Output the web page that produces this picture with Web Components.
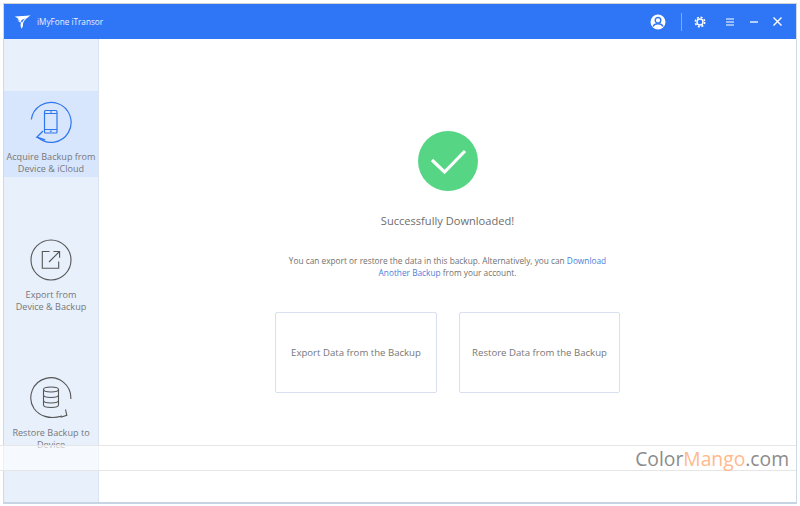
<!DOCTYPE html>
<html>
<head>
<meta charset="utf-8">
<title>iMyFone iTransor</title>
<style>
  html, body { margin: 0; height: 100%; background: #fff; }
  body { font-family: "Open Sans", "Noto Sans", sans-serif; color: #666; }
</style>
</head>
<body>
<app-window>
  <title-bar slot="top" name="iMyFone iTransor"></title-bar>
  <side-nav slot="side">
    <nav-item active>
      <svg slot="icon" viewBox="0 0 44 44" width="44" height="44" fill="none" stroke="#2f76f0" stroke-width="1.2">
        <path d="M2.300 19.500A20 20 0 1 1 9 37.500"/>
        <path d="M14 31 7.800 37.200l8.400 2.600" stroke-width="1.300"/>
        <rect x="15.500" y="10.500" width="12.500" height="22.500" rx="1"/>
        <path d="M15.500 13.500h12.500M15.500 29.500h12.500M21 12h2"/>
        <path d="M20.800 31.200h2"/>
      </svg>
      Acquire Backup from<br>Device &amp; iCloud
    </nav-item>
    <nav-item>
      <svg slot="icon" viewBox="0 0 44 44" width="44" height="44" fill="none" stroke="#555" stroke-width="1.1">
        <circle cx="22" cy="22" r="20"/>
        <path d="M20.500 13.500h-7.200v16.700h16.400v-6.700"/>
        <path d="M20 24 30.500 13.500M24.400 13.500h6.200v6.300"/>
      </svg>
      Export from<br>Device &amp; Backup
    </nav-item>
    <nav-item>
      <svg slot="icon" viewBox="0 0 44 44" width="44" height="44" fill="none" stroke="#555" stroke-width="1.1">
        <path d="M41.800 23A20 20 0 1 0 5 32.500C10 39.500 20 44 33 40"/>
        <path d="M36.500 33.500l1.300 5.800-6.200 2"/>
        <ellipse cx="22" cy="13.500" rx="7.500" ry="2.500"/>
        <path d="M14.500 13.500v15.500c0 1.500 3.500 2.500 7.500 2.500s7.500-1 7.500-2.500V13.500M14.500 19c0 1.500 3.500 2.500 7.500 2.500s7.500-1 7.500-2.500M14.500 24.500c0 1.500 3.500 2.500 7.500 2.500s7.500-1 7.500-2.500"/>
      </svg>
      Restore Backup to<br>Device
    </nav-item>
  </side-nav>
  <success-panel>
    You can export or restore the data in this backup. Alternatively, you can <a href="#" style="color:#4a80dc;text-decoration:none">Download<br>Another Backup</a> from your account.
    <action-card slot="actions">Export Data from the Backup</action-card>
    <action-card slot="actions">Restore Data from the Backup</action-card>
  </success-panel>
  <watermark-strip slot="overlay"></watermark-strip>
</app-window>
<script>
class AppWindow extends HTMLElement {
  constructor() {
    super()
    this.attachShadow({mode: 'open'})
    this.shadowRoot.innerHTML = `<style>
      :host { display: block; height: 506px; box-sizing: border-box; padding: 3px 3px 2px 3px; position: relative; }
      .frame {
        height: 100%;
        box-sizing: border-box;
        border: 1px solid #ccd9e8;
        border-top-color: #d4d4d4;
        border-bottom: 2px solid #c6d4e4;
        display: flex;
        flex-direction: column;
      }
      .body { flex: 1; display: flex; min-height: 0; }
    </style>
    <div class="frame">
      <slot name="top"></slot>
      <div class="body"><slot name="side"></slot><slot></slot></div>
    </div>
    <slot name="overlay"></slot>`
  }
}

class TitleBar extends HTMLElement {
  constructor() {
    super()
    this.attachShadow({mode: 'open'})
    this.shadowRoot.innerHTML = `<style>
      :host { display: flex; align-items: center; height: 35px; background: #2f76f6; color: #fff; font-size: 8.200px; }
      .logo { margin-left: 10px; width: 17px; height: 16px; }
      .name { margin-left: 6px; flex: 1; color: #e8f0ff; }
      .tools { display: flex; align-items: center; }
      svg { display: block; }
      .sep { width: 1px; height: 18px; background: #7fa9f5; margin: 0 12px 0 15px; }
    </style>
    <svg class="logo" viewBox="0 0 20 18">
      <path fill="#fff" d="M1 2.500 15 1.500 19.500 1 15 4.500c-3 2-5 5.500-4.500 9.500L9 17c-1.500-2.500-1.500-5-.8-7.500L5 8.500 7 7.200 4 6.800 5.500 5.500 1 2.500Z"/>
      <path fill="#2f76f6" d="M9.500 10c.5-2 2-4 4-5.500-2.500 1-4.500 2-5.500 3.500Z"/>
    </svg>
    <span class="name"></span>
    <div class="tools">
      <svg width="16" height="16" viewBox="0 0 16 16">
        <circle cx="8" cy="8" r="7.500" fill="#fff"/>
        <circle cx="8" cy="6.300" r="2.800" fill="none" stroke="#2f76f6" stroke-width="1.400"/>
        <path d="M3 12.500c1-2.200 3-2.800 5-2.800s4 .6 5 2.800" fill="none" stroke="#2f76f6" stroke-width="1.400"/>
      </svg>
      <div class="sep"></div>
      <svg width="12" height="12" viewBox="0 0 12 12" fill="none" stroke="#fff" style="margin-right:19px">
        <circle cx="6" cy="6" r="3" stroke-width="1.400"/>
        <circle cx="6" cy="6" r="4.700" stroke-width="1.500" stroke-dasharray="2 1.690"/>
      </svg>
      <svg width="10" height="10" viewBox="0 0 10 10" fill="none" stroke="#fff" stroke-width="1.100" style="margin-right:14px">
        <path d="M1 2h8M1 5h8M1 8h8"/>
      </svg>
      <svg width="10" height="10" viewBox="0 0 10 10" fill="none" stroke="#fff" stroke-width="1.300" style="margin-right:13px">
        <path d="M1 5h8"/>
      </svg>
      <svg width="11" height="11" viewBox="0 0 11 11" fill="none" stroke="#fff" stroke-width="1.400" style="margin-right:13px">
        <path d="M1.500 1.500l8 8M9.500 1.500l-8 8"/>
      </svg>
    </div>`
    this.shadowRoot.querySelector('.name').textContent = this.getAttribute('name')
  }
}

class SideNav extends HTMLElement {
  constructor() {
    super()
    this.attachShadow({mode: 'open'})
    this.shadowRoot.innerHTML = `<style>
      :host {
        display: flex;
        flex-direction: column;
        gap: 52px;
        box-sizing: border-box;
        width: 95px;
        padding-top: 52px;
        background: #e8f0fc;
        border-right: 1px solid #dbe3ee;
      }
    </style>
    <slot></slot>`
  }
}

class NavItem extends HTMLElement {
  constructor() {
    super()
    this.attachShadow({mode: 'open'})
    this.shadowRoot.innerHTML = `<style>
      :host {
        display: flex;
        flex-direction: column;
        align-items: center;
        height: 86px;
        box-sizing: border-box;
        padding-top: 9px;
        font-size: 9.100px;
        line-height: 12px;
        text-align: center;
        white-space: nowrap;
        color: #777;
      }
      :host([active]) { background: #d8e6fd; }
      .icon { height: 44px; margin-bottom: 7px; }
      ::slotted(svg) { display: block; }
    </style>
    <div class="icon"><slot name="icon"></slot></div>
    <div><slot></slot></div>`
  }
}

class SuccessPanel extends HTMLElement {
  constructor() {
    super()
    this.attachShadow({mode: 'open'})
    this.shadowRoot.innerHTML = `<style>
      :host {
        flex: 1;
        display: flex;
        flex-direction: column;
        align-items: center;
        padding-top: 92px;
        background: #fff;
      }
      svg { display: block; }
      .title { margin-top: 22px; font-size: 11.100px; line-height: 16px; color: #6e6e6e; }
      .note { margin-top: 26px; font-size: 8.300px; line-height: 12px; text-align: center; color: #707070; }
      .actions { display: flex; gap: 22px; margin-top: 33px; }
    </style>
    <svg width="60" height="60" viewBox="0 0 60 60">
      <circle cx="30" cy="30" r="30" fill="#56d685"/>
      <path d="M14 29l12.500 12L47 20" fill="none" stroke="#fff" stroke-width="3.200"/>
    </svg>
    <div class="title">Successfully Downloaded!</div>
    <div class="note"><slot></slot></div>
    <div class="actions"><slot name="actions"></slot></div>`
  }
}

class ActionCard extends HTMLElement {
  constructor() {
    super()
    this.attachShadow({mode: 'open'})
    this.shadowRoot.innerHTML = `<style>
      :host {
        display: flex;
        align-items: center;
        justify-content: center;
        box-sizing: border-box;
        width: 162px;
        height: 81px;
        border: 1px solid #d8dfee;
        border-radius: 2px;
        font-size: 9.600px;
        color: #777;
        background: #fff;
      }
      :host(:last-child) { width: 161px; }
    </style>
    <slot></slot>`
  }
}

class WatermarkStrip extends HTMLElement {
  constructor() {
    super()
    this.attachShadow({mode: 'open'})
    this.shadowRoot.innerHTML = `<style>
      :host {
        position: absolute;
        left: 0;
        top: 445px;
        width: 796px;
        height: 26px;
        box-sizing: border-box;
        border-top: 1px solid #e6e6e6;
        border-bottom: 1px solid #e6e6e6;
        background: rgba(255, 255, 255, .6);
        display: flex;
        align-items: center;
        justify-content: flex-end;
        padding-right: 7px;
        font-size: 19.300px;
        color: #8c8c8c;
      }
      span { color: #ffb98c; }
    </style>
    Color<span>Mango</span>.com`
  }
}

customElements.define('app-window', AppWindow)
customElements.define('title-bar', TitleBar)
customElements.define('side-nav', SideNav)
customElements.define('nav-item', NavItem)
customElements.define('success-panel', SuccessPanel)
customElements.define('action-card', ActionCard)
customElements.define('watermark-strip', WatermarkStrip)
</script>
</body>
</html>
